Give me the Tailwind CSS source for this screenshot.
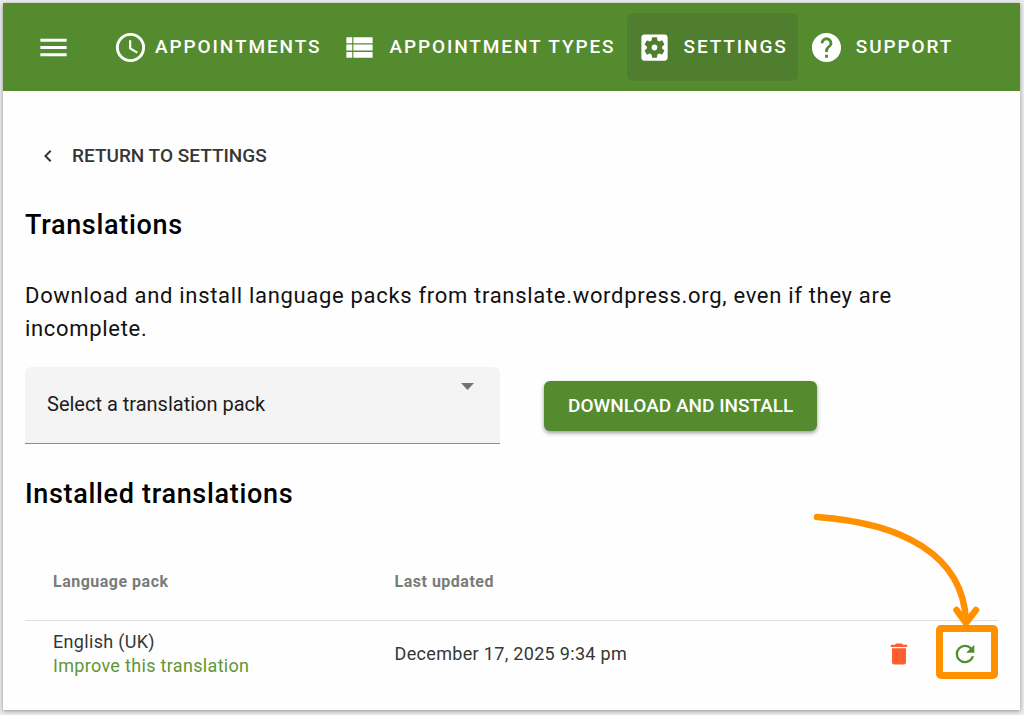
<!DOCTYPE html>
<html lang="en">
<head>
<meta charset="utf-8">
<meta name="viewport" content="width=device-width, initial-scale=1">
<title>Translations</title>
<script src="https://cdn.jsdelivr.net/npm/@tailwindcss/browser@4"></script>
</head>
<body class="min-h-screen bg-[#e9ebed] font-['Roboto',sans-serif] text-black flex flex-col px-[3px] pt-[3px] pb-[5px]">
<div class="flex-1 bg-[#fefefe] shadow-[0_1px_4px_rgba(0,0,0,0.4)] flex flex-col mr-px">
  <header class="bg-[#558b2f] h-[88px] shrink-0 flex items-center pl-[33px] text-white">
    <button type="button" aria-label="Menu" class="mr-8 shrink-0">
      <svg class="size-[35px]" viewBox="0 0 24 24" fill="currentColor"><path d="M3 6h18v2H3zM3 11h18v2H3zM3 16h18v2H3z"/></svg>
    </button>
    <nav class="flex gap-px text-[19px] font-medium tracking-widest whitespace-nowrap">
      <a href="#" class="h-[68px] px-[10px] flex items-center gap-[7px] rounded-md">
        <svg class="size-[35px] shrink-0" viewBox="0 0 24 24" fill="currentColor"><path d="M12,20A8,8 0 0,0 20,12A8,8 0 0,0 12,4A8,8 0 0,0 4,12A8,8 0 0,0 12,20M12,2A10,10 0 0,1 22,12A10,10 0 0,1 12,22C6.47,22 2,17.5 2,12A10,10 0 0,1 12,2M12.5,7V12.25L17,14.92L16.25,16.15L11,13V7H12.5Z"/></svg>
        APPOINTMENTS</a>
      <a href="#" class="h-[68px] px-[10px] flex items-center gap-3 rounded-md">
        <svg class="size-[35px] shrink-0" viewBox="0 0 24 24" fill="currentColor"><path d="M3 5h4v4H3zM3 10h4v4H3zM3 15h4v4H3zM7.8 5H21v4H7.8zM7.8 10H21v4H7.8zM7.8 15H21v4H7.8z"/></svg>
        APPOINTMENT TYPES</a>
      <a href="#" aria-current="page" class="h-[68px] px-[10px] flex items-center gap-3 rounded-md bg-[#4e7e2e]">
        <svg class="size-[35px] shrink-0" viewBox="0 0 24 24" fill="currentColor"><path d="M12 10c-1.1 0-2 .9-2 2s.9 2 2 2 2-.9 2-2-.9-2-2-2zm7-7H5c-1.11 0-2 .9-2 2v14c0 1.1.89 2 2 2h14c1.11 0 2-.9 2-2V5c0-1.1-.89-2-2-2zm-1.75 9c0 .23-.02.46-.05.68l1.48 1.16c.13.11.17.3.08.45l-1.4 2.42c-.09.15-.27.21-.43.15l-1.74-.7c-.36.28-.76.51-1.18.69l-.26 1.85c-.03.17-.18.3-.35.3h-2.8c-.17 0-.32-.13-.35-.29l-.26-1.85c-.43-.18-.82-.41-1.18-.69l-1.74.7c-.16.06-.34 0-.43-.15l-1.4-2.42c-.09-.15-.05-.34.08-.45l1.48-1.16c-.03-.23-.05-.46-.05-.69 0-.23.02-.46.05-.68l-1.48-1.16c-.13-.11-.17-.3-.08-.45l1.4-2.42c.09-.15.27-.21.43-.15l1.74.7c.36-.28.76-.51 1.18-.69l.26-1.85c.03-.17.18-.3.35-.3h2.8c.17 0 .32.13.35.29l.26 1.85c.43.18.82.41 1.18.69l1.74-.7c.16-.06.34 0 .43.15l1.4 2.42c.09.15.05.34-.08.45l-1.48 1.16c.03.23.05.46.05.69z"/></svg>
        SETTINGS</a>
      <a href="#" class="h-[68px] px-[10px] flex items-center gap-3 rounded-md">
        <svg class="size-[35px] shrink-0" viewBox="0 0 24 24" fill="currentColor"><path d="M15.07,11.25L14.17,12.17C13.45,12.89 13,13.5 13,15H11V14.5C11,13.39 11.45,12.39 12.17,11.67L13.41,10.41C13.78,10.05 14,9.55 14,9C14,7.89 13.1,7 12,7A2,2 0 0,0 10,9H8A4,4 0 0,1 12,5A4,4 0 0,1 16,9C16,9.88 15.64,10.67 15.07,11.25M13,19H11V17H13M12,2A10,10 0 0,0 2,12A10,10 0 0,0 12,22A10,10 0 0,0 22,12C22,6.47 17.5,2 12,2Z"/></svg>
        SUPPORT</a>
    </nav>
  </header>

  <main class="px-[22px] pt-12">
    <a href="#" class="ml-[11px] inline-flex h-[34px] items-center gap-3 text-[19px] font-medium text-[#363636]">
      <svg class="size-6" viewBox="0 0 24 24" fill="currentColor"><path d="M15.41,16.58L10.83,12L15.41,7.41L14,6L8,12L14,18L15.41,16.58Z"/></svg>
      RETURN TO SETTINGS</a>

    <h1 class="mt-7 text-[27px] leading-[44px] font-medium tracking-wide">Translations</h1>
    <p class="mt-8 text-[22px] leading-[33px] tracking-[0.03125em] text-[#111]">Download and install language packs from translate.wordpress.org, even if they are incomplete.</p>

    <div class="mt-[22px] flex items-center gap-11">
      <div class="relative w-[475px] shrink">
        <select aria-label="Translation pack" class="block h-[77px] w-full appearance-none rounded-t-md border-b border-[#8c8c8c] bg-[#f4f4f4] pb-[2px] pl-[22px] pr-14 text-[20px] text-[#1c1c1c]">
          <option>Select a translation pack</option>
        </select>
        <svg class="pointer-events-none absolute right-[26px] top-4 h-[7px] w-[13px]" viewBox="0 0 13 7" fill="#737373"><path d="M0 0h13L6.500 7z"/></svg>
      </div>
      <button type="button" class="h-[50px] rounded-md bg-[#558b2f] px-6 pt-[2px] text-[19px] font-medium whitespace-nowrap text-white shadow-[0_2px_4px_rgba(0,0,0,0.4)]">DOWNLOAD AND INSTALL</button>
    </div>

    <h2 class="mt-7 text-[27px] leading-[44px] font-medium tracking-wide">Installed translations</h2>

    <table class="mt-[27px] w-full text-left">
      <thead>
        <tr class="h-[77px] border-b border-[#e0e0e0] text-[16px] tracking-[0.03125em] text-[#7b7b7b]">
          <th class="w-[35%] pl-7 pt-[2px] font-bold">Language pack</th>
          <th class="pl-[29px] pt-[2px] font-bold">Last updated</th>
          <td></td>
        </tr>
      </thead>
      <tbody>
        <tr class="h-[67px] text-[18px] leading-6 tracking-[0.0178em] text-[#363636]">
          <td class="pl-7">English (UK)<br><a href="#" class="text-[#5f9638]">Improve this translation</a></td>
          <td class="pl-[29px]">December 17, 2025 9:34 pm</td>
          <td>
            <div class="flex items-center justify-end gap-[38px] pr-[19px]">
              <button type="button" aria-label="Delete" class="text-[#ff5f2e]">
                <svg class="size-7" viewBox="0 0 24 24" fill="currentColor"><path d="M19,4H15.5L14.500,3H9.500L8.500,4H5V6H19M6,19A2,2 0 0,0 8,21H16A2,2 0 0,0 18,19V7H6V19Z"/></svg>
              </button>
              <div class="relative">
                <button type="button" aria-label="Update" class="block text-[#558b2f]">
                  <svg class="size-7" viewBox="0 0 24 24" fill="currentColor"><path d="M17.65,6.35C16.2,4.9 14.21,4 12,4A8,8 0 0,0 4,12A8,8 0 0,0 12,20C15.73,20 18.84,17.45 19.73,14H17.65C16.83,16.33 14.61,18 12,18A6,6 0 0,1 6,12A6,6 0 0,1 12,6C13.66,6 15.14,6.69 16.22,7.78L13,11H20V4L17.65,6.35Z"/></svg>
                </button>
                <!-- Callout: arrow and frame around the update button -->
                <svg class="pointer-events-none absolute -right-5 -bottom-3 h-[170px] w-[190px]" viewBox="0 0 190 170" fill="none" stroke="#ff9100" stroke-linecap="round" stroke-linejoin="round">
                  <path stroke-width="6.5" d="M8 7C92 13 154 44 157 111M147.500 100L157 113L167 100"/>
                  <rect stroke-width="7" x="130.500" y="118.500" width="55" height="47" rx="1.500"/>
                </svg>
              </div>
            </div>
          </td>
        </tr>
      </tbody>
    </table>
  </main>
</div>
</body>
</html>
